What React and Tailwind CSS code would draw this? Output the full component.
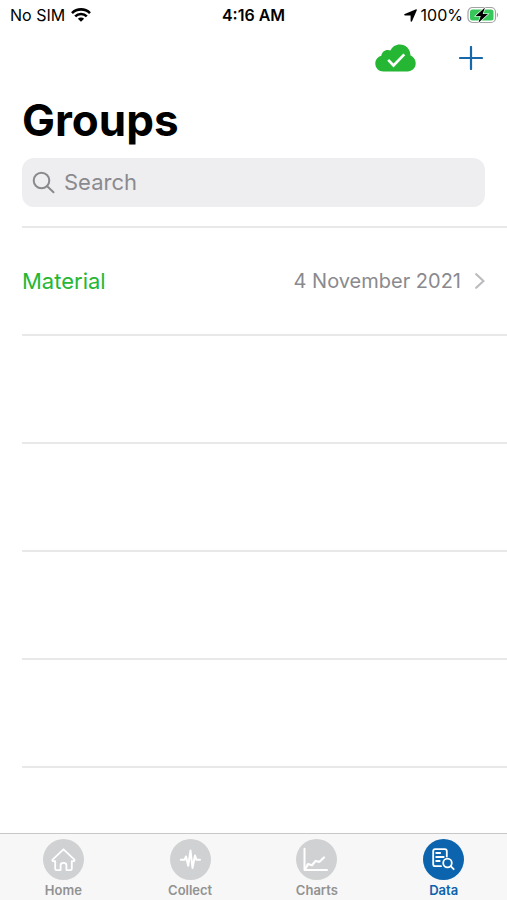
import React, { useState } from "react";

const groups = [{ name: "Material", date: "4 November 2021" }];
const emptyRows = 4;

const WifiIcon = () => (
  <svg className="h-[14px] w-5" viewBox="0 0 20 14" fill="none" stroke="black" strokeWidth="2.6" aria-hidden="true">
    <path d="M1 5.1a12.8 12.8 0 0 1 18 0" />
    <path d="M4.2 8.4a8.2 8.2 0 0 1 11.6 0" />
    <path d="M10 13.8 6.9 10.7a4.4 4.4 0 0 1 6.2 0z" fill="black" stroke="none" />
  </svg>
);

const LocationIcon = () => (
  <svg className="h-[13px] w-[13px]" viewBox="0 0 12 12" aria-hidden="true">
    <path d="M11.2.2a.6.6 0 0 1 .6.9L7.4 11.300c-.3.700-1.300.500-1.300-.3V6.200c0-.2-.1-.3-.3-.3H1C.1 5.900-.1 4.900.700 4.500z" />
  </svg>
);

const BatteryIcon = () => (
  <svg className="h-[18px] w-8" viewBox="0 0 32 18" aria-hidden="true">
    <rect x="1" y="1.5" width="27.5" height="15" rx="4.5" fill="white" stroke="#a3a3a3" strokeWidth="1.2" />
    <rect x="3" y="3.5" width="23.5" height="11" rx="2.5" fill="#35c759" />
    <path d="M30 6.8c1.5.6 1.5 3.8 0 4.4z" fill="#a3a3a3" />
    <path d="M18 1.500 8.500 10h5.200l-2.300 6.800L21 8h-5.300z" fill="black" stroke="white" strokeWidth="1.2" paintOrder="stroke" />
  </svg>
);

const CloudIcon = () => (
  <svg className="h-7 w-[41px]" viewBox="0 0 41 28" aria-hidden="true">
    <path
      d="M8.500 27.500C3.800 27.500.3 24 .3 19.500c0-3.900 2.500-6.800 6-7.800C6.800 8 9.700 5.700 13 5.900c.9 0 1.700.2 2.400.5C17.200 2.700 20.600.4 24.800.4c6 0 10.600 4.600 10.700 11C38.600 12.700 40.700 15.800 40.700 19.300c0 4.700-3.500 8.200-8.200 8.200z"
      fill="#25b734"
    />
    <path d="M13.200 15.800 18.500 21.500 29.300 10.300" fill="none" stroke="white" strokeWidth="2.600" />
  </svg>
);

const PlusIcon = () => (
  <svg className="h-6 w-6" viewBox="0 0 24 24" fill="none" stroke="#1767ab" strokeWidth="2.2" strokeLinecap="round" aria-hidden="true">
    <path d="M12 1v22M1 12h22" />
  </svg>
);

const SearchIcon = () => (
  <svg className="h-6 w-6" viewBox="0 0 24 24" fill="none" stroke="#8a8a8e" strokeWidth="2" strokeLinecap="round" aria-hidden="true">
    <circle cx="9.5" cy="9.500" r="7.800" />
    <path d="m15.200 15.200 6.300 6" />
  </svg>
);

const ChevronIcon = () => (
  <svg className="h-4 w-[10px]" viewBox="0 0 10 16" fill="none" stroke="#bcbcc0" strokeWidth="2.2" strokeLinecap="round" strokeLinejoin="round" aria-hidden="true">
    <path d="m1.2 1.2 7.300 6.800-7.300 6.800" />
  </svg>
);

const HomeGlyph = () => (
  <path d="M9.800 20.300 20.500 10.300l10.700 10c.8.8.2 1.900-.8 1.900h-1.600v7.600c0 .9-.4 1.300-1.200 1.300h-4.200v-4.800c0-3.200-5.800-3.200-5.800 0v4.800h-4.200c-.8 0-1.200-.4-1.200-1.300v-7.600h-1.600c-1.200 0-1.700-1.100-.8-1.900z" />
);

const CollectGlyph = () => (
  <path d="M10.800 20.800h3.700l1.500-3.300 2.200 9.300 2.300-15.300 2 17.500 2.500-12.500 1.500 4.300h3.500" strokeWidth="2" />
);

const ChartsGlyph = () => (
  <>
    <path d="M8.500 9.800v21.200h22.500" strokeWidth="2" />
    <path d="m9.500 29.500 2.500-4.500 4 1.300 3.500-4.300 4 .8 4.500-4.300" strokeWidth="2.200" />
  </>
);

const DataGlyph = () => (
  <>
    <path d="M18 27.200h-5.800c-1.200 0-2-.8-2-2v-13c0-1.200.8-2 2-2h9.600c1.200 0 2 .8 2 2v5.300" />
    <path d="M13.200 14h4M13.200 18h7.500M13.200 22h3.500" />
    <circle cx="24.500" cy="24" r="4.300" />
    <path d="m27.700 27.200 3 3" />
  </>
);

const tabs = [
  { name: "Home", Glyph: HomeGlyph },
  { name: "Collect", Glyph: CollectGlyph },
  { name: "Charts", Glyph: ChartsGlyph },
  { name: "Data", Glyph: DataGlyph },
];

const App = () => {
  const [query, setQuery] = useState("");
  const [activeTab, setActiveTab] = useState("Data");

  const visibleGroups = groups.filter((group) =>
    group.name.toLowerCase().includes(query.toLowerCase())
  );

  return (
    <div className="flex h-screen flex-col bg-white font-['Inter','Liberation_Sans',sans-serif] text-black">
      {/* status bar */}
      <div className="grid h-[30px] shrink-0 grid-cols-3 items-center px-2 text-base">
        <div className="flex items-center gap-1.5 pl-0.5">
          <span>No SIM</span>
          <WifiIcon />
        </div>
        <span className="text-center font-semibold">4:16 AM</span>
        <div className="flex items-center justify-end gap-1">
          <LocationIcon />
          <span>100%</span>
          <BatteryIcon />
        </div>
      </div>

      <header className="shrink-0 px-[22px]">
        <div className="flex h-14 items-center justify-end gap-[43px] pr-0.5">
          <button type="button" aria-label="Synced">
            <CloudIcon />
          </button>
          <button type="button" aria-label="Add group">
            <PlusIcon />
          </button>
        </div>
        <h1 className="pt-1.5 pb-2.5 text-[44px] leading-[56px] font-bold">Groups</h1>
        <label className="flex h-[49px] items-center gap-2 rounded-xl bg-[#eeeef0] px-2.5">
          <SearchIcon />
          <input
            type="text"
            aria-label="Search"
            className="min-w-0 flex-1 bg-transparent text-[22px] outline-none placeholder:text-[#8a8a8e]"
            placeholder="Search"
            value={query}
            onChange={(e) => setQuery(e.target.value)}
          />
        </label>
      </header>

      <main className="min-h-0 flex-1 overflow-hidden pt-[19px] pl-[22px]">
        <ul className="border-t-2 border-[#e8e8e8]">
          {visibleGroups.map((group) => (
            <li key={group.name} className="border-b-2 border-[#e8e8e8]">
              <a href="#group" className="flex h-[106px] items-center justify-between pr-[22px]">
                <span className="text-[22px] text-[#25b734]">{group.name}</span>
                <span className="flex items-center gap-3.5 text-xl text-[#8a8a8e]">
                  {group.date}
                  <ChevronIcon />
                </span>
              </a>
            </li>
          ))}
          {Array.from({ length: emptyRows }).map((_, index) => (
            <li key={index} className="h-[108px] border-b-2 border-[#e8e8e8]" />
          ))}
        </ul>
      </main>

      <nav className="grid shrink-0 grid-cols-4 border-t border-[#c8c8c8] bg-[#f7f7f7] pt-[5px]">
        {tabs.map(({ name, Glyph }) => (
          <button
            key={name}
            type="button"
            className={`flex flex-col items-center text-[13px] leading-5 font-semibold ${
              activeTab === name ? "text-[#0b64ad]" : "text-[#929292]"
            }`}
            onClick={() => setActiveTab(name)}
          >
            <svg
              className="h-[41px] w-[41px]"
              viewBox="0 0 41 41"
              fill="none"
              stroke="white"
              strokeWidth="1.8"
              strokeLinecap="round"
              strokeLinejoin="round"
              aria-hidden="true"
            >
              <circle cx="20.5" cy="20.5" r="20.5" fill={activeTab === name ? "#0b64ad" : "#cfd1d2"} stroke="none" />
              <Glyph />
            </svg>
            {name}
          </button>
        ))}
      </nav>
    </div>
  );
};

export default App;
